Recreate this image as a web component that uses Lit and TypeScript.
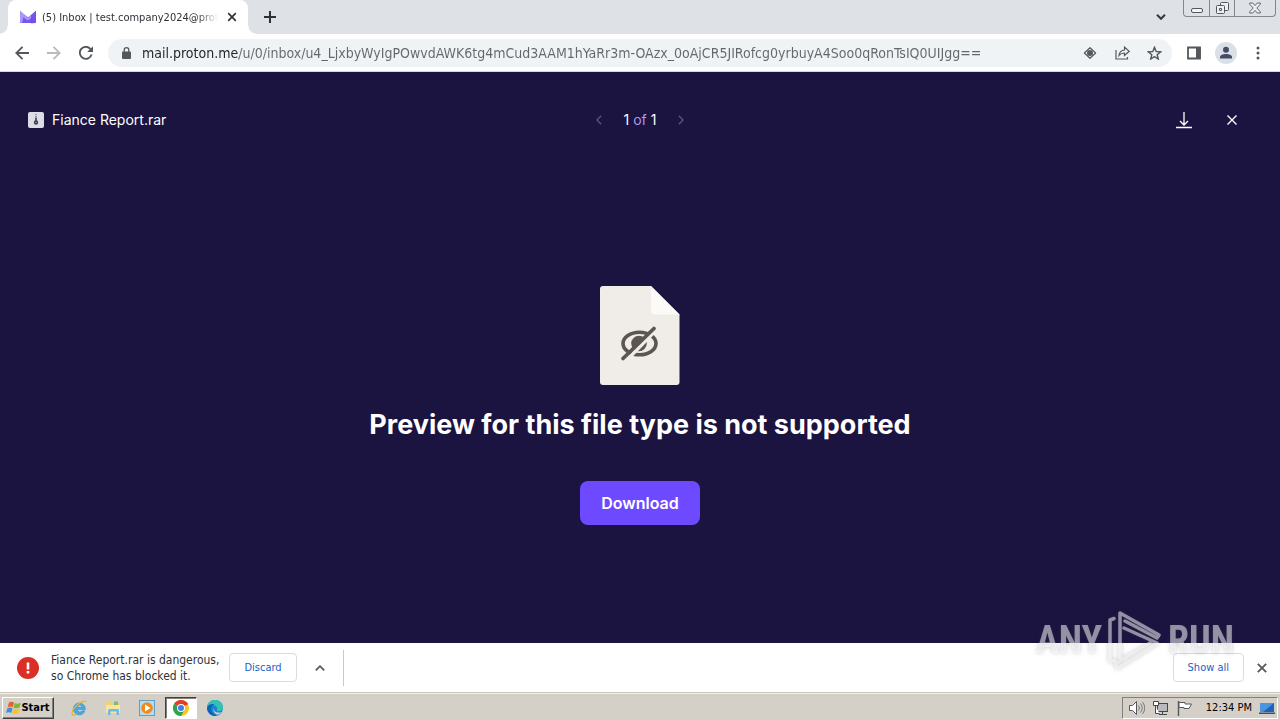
import { LitElement, html, css, svg } from "lit";
import { customElement } from "lit/decorators.js";

const icon = (w: number, h: number, body: unknown, vb = `0 0 ${w} ${h}`) =>
  html`<svg width=${w} height=${h} viewBox=${vb} aria-hidden="true">${body}</svg>`;

const shared = css`
  :host {
    display: block;
    font-family: "DejaVu Sans Condensed", "Noto Sans", sans-serif;
    font-size: 11px;
    color: #303336;
  }
  * {
    box-sizing: border-box;
  }
  svg {
    display: block;
    flex: none;
  }
  button {
    display: flex;
    align-items: center;
    justify-content: center;
    flex: none;
    padding: 0;
    border: 0;
    background: none;
    color: inherit;
    font: inherit;
    cursor: pointer;
  }
`;

@customElement("browser-tabs")
export class BrowserTabs extends LitElement {
  static styles = [
    shared,
    css`
      .strip {
        display: flex;
        align-items: center;
        height: 34px;
        padding: 0 4px 0 8px;
        background: #dee1e6;
      }
      .tab {
        display: flex;
        position: relative;
        align-items: center;
        gap: 6px;
        width: 240px;
        height: 34px;
        padding: 0 8px 0 12px;
        border-radius: 8px 8px 0 0;
        background: #fff;
      }
      .tab::before,
      .tab::after {
        content: "";
        position: absolute;
        bottom: 0;
        width: 8px;
        height: 8px;
      }
      .tab::before {
        right: 100%;
        background: radial-gradient(circle at 0 0, transparent 7px, #fff 8px);
      }
      .tab::after {
        left: 100%;
        background: radial-gradient(circle at 100% 0, transparent 7px, #fff 8px);
      }
      .title {
        flex: 1;
        min-width: 0;
        overflow: hidden;
        white-space: nowrap;
        color: #2f3237;
        -webkit-mask-image: linear-gradient(to right, #000 88%, transparent);
        mask-image: linear-gradient(to right, #000 88%, transparent);
      }
      .tool {
        width: 16px;
        height: 16px;
        color: #303338;
      }
      .add {
        margin-left: 8px;
        width: 28px;
        height: 28px;
        color: #2d3035;
      }
      .search {
        margin-left: auto;
        margin-right: 8px;
        width: 28px;
        height: 28px;
        color: #35383d;
      }
      .frame {
        display: flex;
        align-self: flex-start;
        height: 17px;
        border: 1px solid #83888f;
        border-top: 0;
        border-radius: 0 0 4px 4px;
        color: #53585f;
      }
      .frame button {
        width: 25px;
      }
      .frame button + button {
        border-left: 1px solid #83888f;
      }
      .frame button:last-child {
        width: 41px;
      }
    `,
  ];

  render() {
    return html`<header class="strip">
      <div class="tab">
        ${icon(16, 16, svg`
          <path d="M0 2.2 8 8.2 16 2.2V14H0Z" fill="#8b6cf5"/>
          <path d="M0 1.600 8 9 11 6.2V14H2a2 2 0 0 1-2-2Z" fill="#a997fa"/>
          <path d="M16 1.6v10.6a2 2 0 0 1-2 2h-3V6.2Z" fill="#7550ee"/>
          <path d="M3.500 8 6 10.600a3 3 0 0 0 3.500-.2L11.500 8.500V14H2Z" fill="#6a43ea" opacity=".8"/>`)}
        <span class="title">(5) Inbox | test.company2024@prot</span>
        <button class="tool" aria-label="Close tab">
          ${icon(10, 10, svg`<path d="m1.200 1.200 7.600 7.600m0-7.600-7.600 7.600" stroke="currentColor" stroke-width="1.700"/>`)}
        </button>
      </div>
      <button class="add" aria-label="New tab">
        ${icon(12, 12, svg`<path d="M6 0v12M0 6h12" stroke="currentColor" stroke-width="2"/>`)}
      </button>
      <button class="search" aria-label="Search tabs">
        ${icon(10, 6, svg`<path d="m1 .8 4 4 4-4" fill="none" stroke="currentColor" stroke-width="2"/>`)}
      </button>
      <div class="frame">
        <button aria-label="Minimize">
          ${icon(12, 16, svg`<rect x=".5" y="8.500" width="11" height="4" rx="1.500" fill="#f4f5f7" stroke="currentColor"/>`)}
        </button>
        <button aria-label="Restore">
          ${icon(13, 16, svg`<g fill="#eef0f3" stroke="currentColor"><rect x="4.500" y="2.500" width="8" height="8" rx="1"/><rect x=".5" y="5.500" width="8" height="8" rx="1"/><path d="M3.500 8.500h2v2h-2z"/></g>`)}
        </button>
        <button aria-label="Close">
          ${icon(12, 16, svg`<path d="M.7 3h3L6 5.600 8.300 3h3v1.200L7.800 8l3.500 3.800V13h-3L6 10.400 3.700 13h-3v-1.200L4.200 8 .7 4.200Z" fill="#eef0f3" stroke="currentColor" stroke-width=".9"/>`)}
        </button>
      </div>
    </header>`;
  }
}

@customElement("browser-toolbar")
export class BrowserToolbar extends LitElement {
  static styles = [
    shared,
    css`
      .bar {
        display: flex;
        align-items: center;
        gap: 4px;
        height: 38px;
        padding: 0 8px;
        border-bottom: 1px solid #d5d6e0;
        background: #fff;
        color: #54575c;
      }
      .bar button {
        width: 28px;
        height: 28px;
      }
      .bar .off {
        color: #b8babd;
      }
      .omnibox {
        display: flex;
        flex: 1;
        align-items: center;
        gap: 4px;
        height: 28px;
        margin: 0 4px;
        padding: 0 4px;
        border-radius: 14px;
        background: #f0f3f5;
      }
      .bar .lock {
        margin-right: -2px;
      }
      .url {
        flex: 1;
        min-width: 0;
        height: 24px;
        padding: 0;
        border: 0;
        outline: 0;
        background: linear-gradient(to right, #1f2227 97px, #63676c 97px);
        -webkit-background-clip: text;
        background-clip: text;
        color: #63676c;
        -webkit-text-fill-color: transparent;
        font: 14px "DejaVu Sans Condensed", "Noto Sans", sans-serif;
      }
    `,
  ];

  render() {
    return html`<nav class="bar" aria-label="Browser">
      <button aria-label="Back">
        ${icon(14, 14, svg`<path d="M14 7H1.500M7.500.8 1.300 7l6.200 6.200" fill="none" stroke="currentColor" stroke-width="1.800"/>`)}
      </button>
      <button class="off" aria-label="Forward" disabled>
        ${icon(14, 14, svg`<path d="M0 7h12.500M6.500.8 12.700 7l-6.200 6.200" fill="none" stroke="currentColor" stroke-width="1.800"/>`)}
      </button>
      <button aria-label="Reload">
        ${icon(14, 14, svg`<path d="M12.600 8.500A6 6 0 1 1 11.300 2.800L12.800 4.300" fill="none" stroke="currentColor" stroke-width="1.900"/><path d="M14 .2V6H8.200Z" fill="currentColor"/>`)}
      </button>
      <div class="omnibox">
        <button class="lock" aria-label="View site information">
          ${icon(9, 12, svg`<path d="M2.200 5V3a2.300 2.300 0 0 1 4.600 0v2" fill="none" stroke="currentColor" stroke-width="1.300"/><rect y="4.500" width="9" height="7.500" rx="1" fill="currentColor"/>`)}
        </button>
        <input
          class="url"
          type="text"
          aria-label="Address"
          spellcheck="false"
          value="mail.proton.me/u/0/inbox/u4_LjxbyWyIgPOwvdAWK6tg4mCud3AAM1hYaRr3m-OAzx_0oAjCR5JIRofcg0yrbuyA4Soo0qRonTsIQ0UIJgg=="
        />
        <button aria-label="Lens">
          ${icon(14, 12, svg`<path d="M7 .7 12.600 6 7 11.300 1.400 6Z" fill="none" stroke="currentColor" stroke-width="1.200" stroke-linejoin="round"/><circle cx="7" cy="6" r="3" fill="currentColor"/>`)}
        </button>
        <button aria-label="Share">
          ${icon(15, 15, svg`<path d="M1 5v9h11.500v-2M4 10.500c.4-3.600 2.400-5.300 5.500-5.500V2l4.700 4.300L9.500 10.500V8C7.200 8 5.400 8.700 4 10.500Z" fill="none" stroke="currentColor" stroke-width="1.200"/>`)}
        </button>
        <button aria-label="Bookmark this tab">
          ${icon(15, 14, svg`<path d="m7.500 1.300 1.700 4.200 4.500.3-3.500 2.900 1.100 4.300-3.800-2.400L3.700 13l1.100-4.300-3.500-2.900 4.500-.3Z" fill="none" stroke="currentColor" stroke-width="1.400"/>`)}
        </button>
      </div>
      <button aria-label="Side panel">
        ${icon(14, 14, svg`<path d="M1 1.500h12v11H1Z" fill="none" stroke="currentColor" stroke-width="1.800"/><path d="M9 1h4.500v12H9Z" fill="currentColor"/>`)}
      </button>
      <button aria-label="Profile">
        ${icon(22, 22, svg`<circle cx="11" cy="11" r="11" fill="#dbe0e6"/><circle cx="11" cy="7.700" r="3" fill="#454c66"/><path d="M5 16.500v-1.500c0-2 3-3 6-3s6 1 6 3v1.500Z" fill="#454c66"/>`)}
      </button>
      <button aria-label="Menu">
        ${icon(4, 14, svg`<g fill="currentColor"><circle cx="2" cy="2" r="1.500"/><circle cx="2" cy="7" r="1.500"/><circle cx="2" cy="12" r="1.500"/></g>`)}
      </button>
    </nav>`;
  }
}

@customElement("file-preview")
export class FilePreview extends LitElement {
  static styles = [
    shared,
    css`
      :host {
        display: flex;
        flex-direction: column;
        background: #1b1340;
        color: #fff;
        font-family: Inter, sans-serif;
        font-size: 14px;
      }
      .head {
        display: grid;
        grid-template-columns: 1fr auto 1fr;
        align-items: center;
        height: 48px;
        margin-top: 24px;
        padding: 0 28px;
        line-height: 16px;
      }
      .file,
      .pager,
      .actions {
        display: flex;
        align-items: center;
      }
      .file {
        gap: 8px;
      }
      .pager {
        gap: 16px;
      }
      .pager button {
        width: 18px;
        height: 24px;
        color: #5d5680;
      }
      .of {
        color: #a89af0;
      }
      .actions {
        justify-content: flex-end;
        gap: 8px;
      }
      .actions button {
        width: 40px;
        height: 40px;
      }
      .body {
        display: flex;
        flex: 1;
        flex-direction: column;
        align-items: center;
        justify-content: center;
        padding-top: 24px;
      }
      .message {
        margin: 24px 0 40px;
        font-size: 27px;
        font-weight: 700;
        line-height: 32px;
      }
      .download {
        min-width: 120px;
        height: 44px;
        padding: 0 20px;
        border-radius: 8px;
        background: #6d4aff;
        font-size: 16px;
        font-weight: 600;
      }
    `,
  ];

  render() {
    return html`
      <div class="head">
        <div class="file">
          ${icon(16, 16, svg`<rect width="16" height="16" rx="2" fill="#dcdde6"/><path d="M8 2v4" stroke="#7b7f8c" stroke-width="1.600" stroke-dasharray="1 1"/><path d="M8 5.500V10" stroke="#3c404c" stroke-width="1.600"/><circle cx="8" cy="10.500" r="1.500" fill="#9a9daa" stroke="#3c404c" stroke-width="1.400"/>`)}
          <span>Fiance Report.rar</span>
        </div>
        <div class="pager">
          <button aria-label="Previous">
            ${icon(6, 10, svg`<path d="M5.200.8 1 5l4.200 4.200" fill="none" stroke="currentColor" stroke-width="1.300"/>`)}
          </button>
          <span>1 <span class="of">of</span> 1</span>
          <button aria-label="Next">
            ${icon(6, 10, svg`<path d="M.8.8 5 5 .8 9.200" fill="none" stroke="currentColor" stroke-width="1.300"/>`)}
          </button>
        </div>
        <div class="actions">
          <button aria-label="Download file">
            ${icon(16, 18, svg`<path d="M8 1v13M4 10l4 4 4-4M0 16.500h16" fill="none" stroke="currentColor" stroke-width="1.300"/>`)}
          </button>
          <button aria-label="Close preview">
            ${icon(10, 10, svg`<path d="m.5.5 9 9m0-9-9 9" stroke="currentColor" stroke-width="1.400"/>`)}
          </button>
        </div>
      </div>
      <div class="body">
        ${icon(80, 99, svg`
          <path d="M3 0h48l28.500 28.500V96a3 3 0 0 1-3 3H3a3 3 0 0 1-3-3V3a3 3 0 0 1 3-3Z" fill="#f0ece8"/>
          <path d="M51 0l28.500 28.500H54a3 3 0 0 1-3-3Z" fill="#fbfaf6"/>
          <circle cx="39" cy="57.500" r="7.800" fill="#5b5652"/>
          <ellipse cx="39.500" cy="57.500" rx="16.500" ry="11.300" fill="none" stroke="#5b5652" stroke-width="3.600"/>
          <path d="M25.500 75.500 57 43" stroke="#f0ece8" stroke-width="3.400"/>
          <path d="M23 72.500 54 42.500" stroke="#5b5652" stroke-width="3.800" stroke-linecap="round"/>`)}
        <h1 class="message">Preview for this file type is not supported</h1>
        <button class="download">Download</button>
      </div>
    `;
  }
}

@customElement("download-shelf")
export class DownloadShelf extends LitElement {
  static styles = [
    shared,
    css`
      .shelf {
        display: flex;
        align-items: center;
        height: 49px;
        padding: 0 8px 0 17px;
        background: #fff;
      }
      .warning {
        margin: 0 10px 0 12px;
        font-size: 12px;
        line-height: 16px;
        white-space: nowrap;
      }
      .outlined {
        height: 29px;
        padding: 0 14px;
        border: 1px solid #dadce0;
        border-radius: 4px;
        background: #fff;
        color: #1b63c5;
      }
      .more {
        width: 28px;
        height: 28px;
        margin: 0 9px;
        color: #5a5d61;
      }
      .rule {
        width: 1px;
        height: 36px;
        background: #c8c9cc;
      }
      .all {
        margin-left: auto;
      }
      .close {
        width: 20px;
        height: 20px;
        margin-left: 8px;
        color: #55585c;
      }
    `,
  ];

  render() {
    return html`<section class="shelf" aria-label="Downloads">
      ${icon(22, 22, svg`<circle cx="11" cy="11" r="11" fill="#d92f25"/><path d="M9.700 5.500h2.600v7H9.700zM9.700 14h2.600v2.500H9.700z" fill="#fff"/>`)}
      <div class="warning">Fiance Report.rar is dangerous,<br />so Chrome has blocked it.</div>
      <button class="outlined">Discard</button>
      <button class="more" aria-label="More options">
        ${icon(10, 6, svg`<path d="m.8 5.400 4.200-4.200 4.200 4.200" fill="none" stroke="currentColor" stroke-width="1.800"/>`)}
      </button>
      <span class="rule"></span>
      <button class="outlined all">Show all</button>
      <button class="close" aria-label="Close downloads">
        ${icon(10, 10, svg`<path d="m.8.8 8.400 8.400m0-8.400L.8 9.200" stroke="currentColor" stroke-width="1.800"/>`)}
      </button>
    </section>`;
  }
}

@customElement("task-bar")
export class TaskBar extends LitElement {
  static styles = [
    shared,
    css`
      .bar {
        display: flex;
        align-items: center;
        gap: 2px;
        height: 28px;
        padding: 2px 2px 0;
        border-top: 1px solid #c9c6be;
        background: #d4d0c8;
        box-shadow: inset 0 1px #f2f0ec;
        color: #000;
      }
      .start {
        width: 52px;
        height: 22px;
        margin-right: 7px;
        border: 1px solid;
        border-color: #fff #404040 #404040 #fff;
        box-shadow: inset -1px -1px #808080;
        font-weight: 700;
      }
      .app {
        width: 32px;
        height: 22px;
        border: 1px solid transparent;
      }
      .active {
        border-color: #404040 #fff #fff #404040;
        background: #fff;
        box-shadow: inset 1px 1px #808080;
      }
      .tray {
        display: flex;
        align-items: center;
        gap: 7px;
        height: 22px;
        margin-left: auto;
        padding: 0 2px 0 5px;
        border: 1px solid;
        border-color: #808080 #fff #fff #808080;
      }
      .clock {
        margin-left: 6px;
        white-space: nowrap;
      }
    `,
  ];

  render() {
    return html`<footer class="bar">
      <button class="start">
        ${icon(15, 16, svg`
          <path d="M3 2.500C5 1.300 6.500 1.500 8 2.500L6.800 7.300C5.200 6.400 3.600 6.300 1.700 7.300Z" fill="#e8622a"/>
          <path d="M8.800 3c1.900 1 3.700 1 6-.2l-1.300 4.800c-2 1-4 1-6 .1Z" fill="#7cb63c"/>
          <path d="M1.400 8.200c2-1 3.500-.8 5.200.1L5.300 13C3.700 12.100 2 12.100 0 13Z" fill="#3f8fdc"/>
          <path d="M7.300 8.700c2 .9 4 .9 6-.1L12 13.300c-2 1-4 1-6 .1Z" fill="#f6c22e"/>`)}
        Start
      </button>
      <button class="app" aria-label="Internet Explorer">
        ${icon(16, 16, svg`<path d="M14.300 9.500H6.300a2.600 2.600 0 0 0 4.700 1.300h3A6 6 0 1 1 14.300 8.500ZM6.300 7.300h4.600a2.300 2.300 0 0 0-4.600 0Z" fill="#49a9e4" stroke="#2f86c4" stroke-width=".5"/><path d="M15.200 2.200C14-.2 9.500 1.800 5.500 5.500S.3 13.500 1.500 14.800c.8.700 2.400.2 4-.8" fill="none" stroke="#e3b53a" stroke-width="1.300"/>`)}
      </button>
      <button class="app" aria-label="File Explorer">
        ${icon(16, 16, svg`<path d="M1 2h5l1 1.500h8V14H1Z" fill="#f0d272"/><path d="M9 1.500h4v5H9z" fill="#7cbb76"/><path d="M1 5h14v8H1Z" fill="#f8e6a0"/><path d="M3 15v-4.500a1.500 1.500 0 0 1 1.500-1.500h8a1.500 1.500 0 0 1 1.500 1.500V15h-2.500v-3.500h-6V15Z" fill="#72b8e4"/>`)}
      </button>
      <button class="app" aria-label="Media Player">
        ${icon(16, 16, svg`<rect x=".5" y=".5" width="15" height="15" fill="#b5dbf2" stroke="#5f9fca"/><circle cx="8" cy="8" r="5.800" fill="#f18a1c"/><path d="M6 4.500 11.500 8 6 11.500Z" fill="#fff"/>`)}
      </button>
      <button class="app active" aria-label="Google Chrome">
        ${icon(16, 16, svg`<circle cx="8" cy="8" r="8" fill="#f9c61a"/><path d="M8 8 1.100 4a8 8 0 0 1 13.800 0Z" fill="#e33b2e"/><path d="M1.070 4A8 8 0 0 0 8 16l3.500-6L8 8Z" fill="#2da44e"/><path d="M8 4h6.900" stroke="#e33b2e"/><circle cx="8" cy="8" r="4" fill="#fff"/><circle cx="8" cy="8" r="3" fill="#3f7fe8"/>`)}
      </button>
      <button class="app" aria-label="Microsoft Edge">
        ${icon(16, 16, svg`<circle cx="8" cy="8" r="8" fill="#1584d4"/><path d="M0 8a8 8 0 0 1 16-.5c0 2.500-2 3.700-4.200 3.700-1.500 0-2.400-.6-2-1.300C11 7.500 9.300 5.500 6.500 5.500 3.500 5.500 1 6 0 8Z" fill="#35c1b0"/><path d="M0 8c1-3.500 5-5 8-3.200-3 .2-4.500 2.700-3.800 5.500.6 2.700 2.800 4.500 5.300 5.500A8 8 0 0 1 0 8Z" fill="#0d62b8"/><path d="M7 8c-1 3 2 5.500 7.500 4.200-1.500 2-3.500 2.500-5 2.300C7 13 5.500 10 7 8Z" fill="#d4d0c8"/>`)}
      </button>
      <div class="tray">
        ${icon(17, 16, svg`<path d="M1.500 5.500h3L8.500 1.500v13l-4-4h-3Z" fill="#fff" stroke="#55585c"/><path d="M10.500 5.500q2 2.500 0 5M12.500 3.500q3.500 4.500 0 9M14.500 2q4.500 6 0 12" fill="none" stroke="#777a7e"/>`)}
        ${icon(17, 16, svg`<rect x="5.500" y="3.500" width="10" height="8" fill="#b8babd" stroke="#44474b"/><path d="M7 14.500h8M10.500 12v2" stroke="#44474b"/><path d="M1.500 1.500h5v4h-5zM3.500 6v7.500h4" fill="#fff" stroke="#44474b"/>`)}
        ${icon(17, 16, svg`<path d="M2.500 1v15" stroke="#55585c" stroke-width="1.400"/><path d="M3 2.500h6v1.500h6.500L13 8.500H8v-1H3Z" fill="#fff" stroke="#55585c"/>`)}
        <time class="clock">12:34 PM</time>
        ${icon(16, 14, svg`<path d="M1 2h14v9H1Z" fill="#1e62b8"/><path d="M1 2h14L4 11H1Z" fill="#4b95dc"/><path d="M0 11.500h16V13H0Z" fill="#30507a"/>`)}
      </div>
    </footer>`;
  }
}

@customElement("app-root")
export class AppRoot extends LitElement {
  static styles = css`
    :host {
      display: flex;
      position: relative;
      flex-direction: column;
      min-height: 100vh;
      overflow: hidden;
    }
    file-preview {
      flex: 1;
    }
    .mark {
      display: flex;
      position: absolute;
      right: 46px;
      bottom: 48px;
      align-items: center;
      gap: 3px;
      color: rgb(255 255 255 / 0.52);
      font: 700 38px/64px "Roboto Condensed", "Liberation Sans Narrow", "Roboto", sans-serif;
      filter: drop-shadow(0 0 2px rgb(60 60 70 / 0.5));
      pointer-events: none;
    }
    .mark svg {
      display: block;
    }
  `;

  render() {
    return html`
      <browser-tabs></browser-tabs>
      <browser-toolbar></browser-toolbar>
      <file-preview></file-preview>
      <download-shelf></download-shelf>
      <task-bar></task-bar>
      <div class="mark">
        <span>ANY</span>
        ${icon(60, 64, svg`<path d="M9 10.500 5 12v41h5M21 52l-6-2V5l39 22-2 3-32-17M19 20l33 15-40 25-1-4 34-21" fill="none" stroke="currentColor" stroke-width="3.500" stroke-linejoin="round" stroke-linecap="round"/>`)}
        <span>RUN</span>
      </div>
    `;
  }
}
